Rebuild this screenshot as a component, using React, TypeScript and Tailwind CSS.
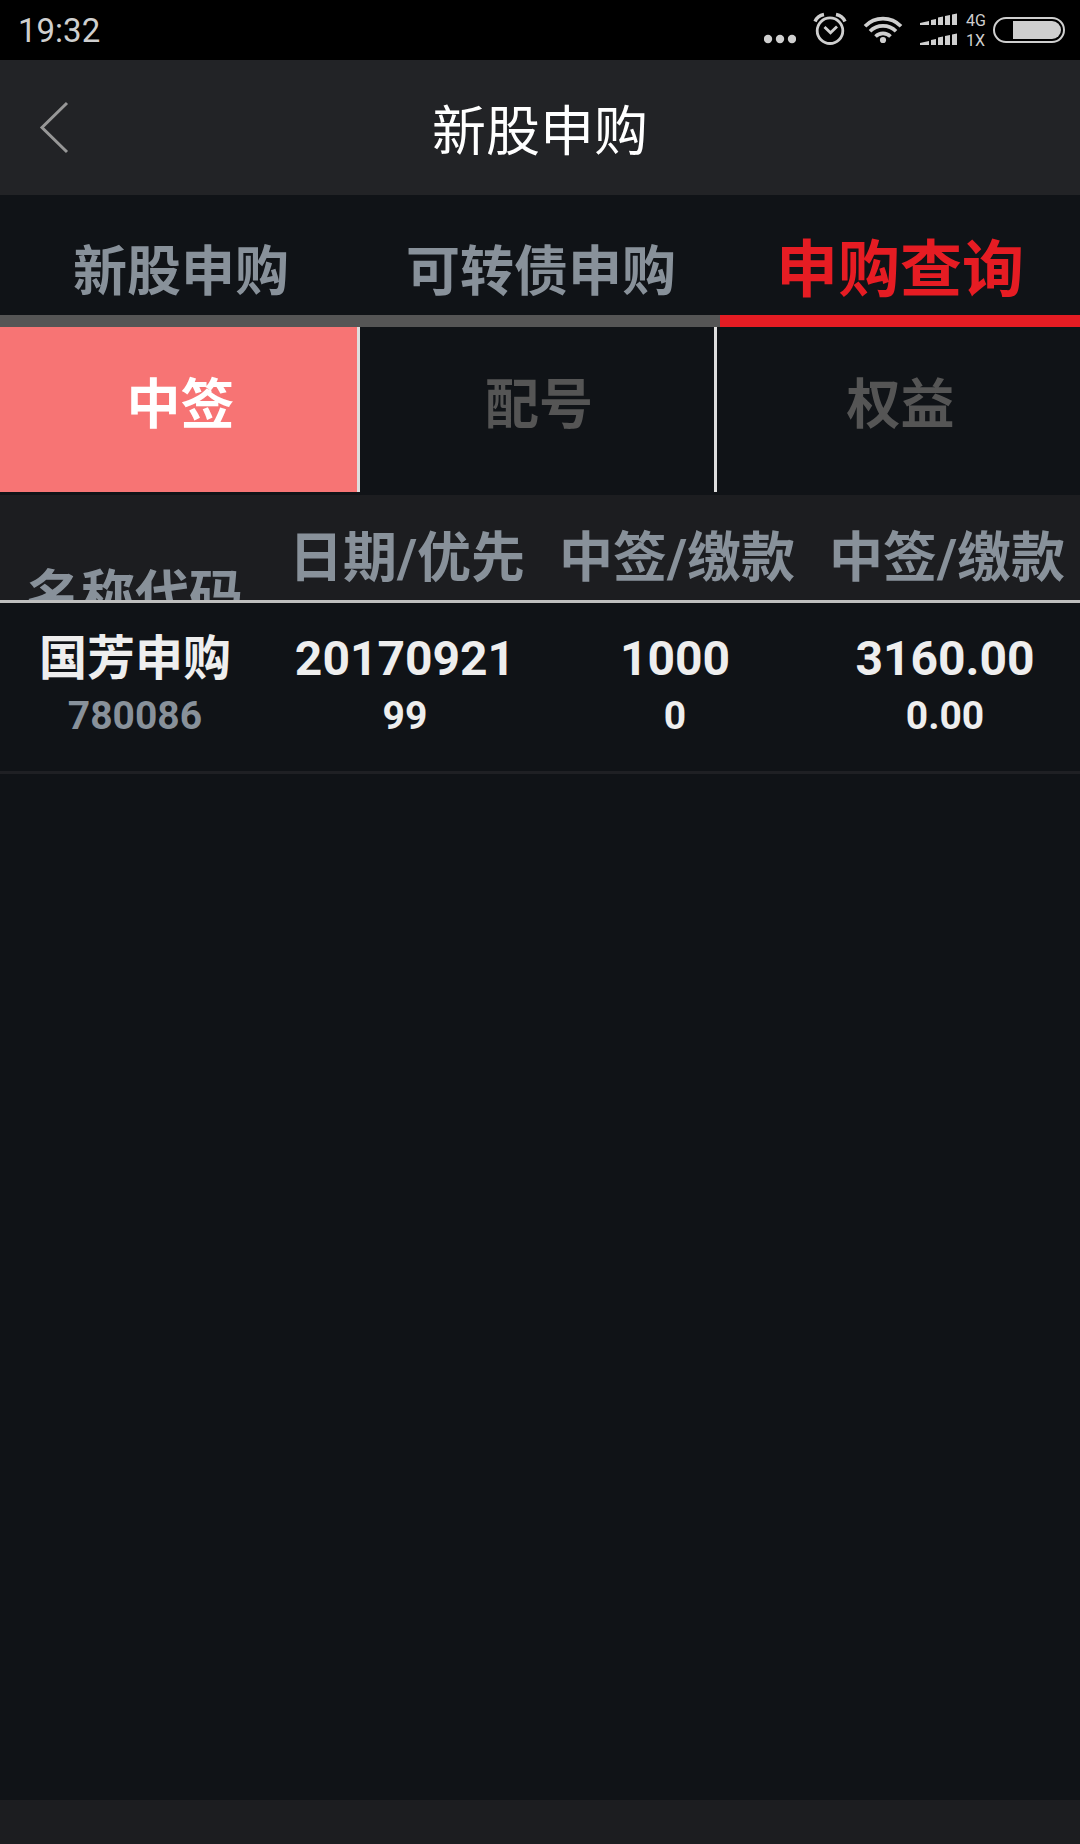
import React from "react";

const queryTabs = ["新股申购", "可转债申购", "申购查询"];
const resultTabs = ["中签", "配号", "权益"];
const columns = ["名称代码", "日期/优先", "中签/缴款", "中签/缴款"];
const rows = [
  [
    ["国芳申购", "780086"],
    ["20170921", "99"],
    ["1000", "0"],
    ["3160.00", "0.00"],
  ],
];

function StatusBar() {
  return (
    <div className="flex h-[60px] shrink-0 items-center justify-between bg-black pl-[18px] pr-[14px] text-[#cfcfcf]">
      <time className="pt-[2px] text-[33px] leading-[58px]">19:32</time>
      <div className="flex items-center">
        <svg className="h-[60px] w-[32px]" viewBox="764 0 32 60" fill="#cfcfcf">
          <circle cx="768" cy="39" r="4.2" />
          <circle cx="780" cy="39" r="4.2" />
          <circle cx="792" cy="39" r="4.2" />
        </svg>
        <svg className="ml-[17px] h-[60px] w-[34px]" viewBox="813 0 34 60" fill="none" stroke="#cfcfcf">
          <circle cx="830" cy="30.7" r="12.8" strokeWidth="2.8" />
          <path d="M824.5 27l6 5.8 6.5-6.3" strokeWidth="2.8" />
          <path d="M815 21.5C816.5 18 820 15.3 824 14.5M845 21.5C843.5 18 840 15.3 836 14.5" strokeWidth="3.4" />
        </svg>
        <svg className="ml-[16px] h-[60px] w-[40px]" viewBox="863 0 40 60" fill="none" stroke="#cfcfcf">
          <path d="M865 26.3A25 25 0 0 1 901 26.3" strokeWidth="3.6" />
          <path d="M870 31.3A18.3 18.3 0 0 1 896 31.3" strokeWidth="3.6" />
          <path d="M875.5 36.5A10.6 10.6 0 0 1 890.5 36.5" strokeWidth="3.6" />
          <circle cx="883" cy="40" r="3.1" fill="#cfcfcf" stroke="none" />
        </svg>
        <svg className="ml-[16px] h-[60px] w-[39px]" viewBox="919 0 39 60" fill="#cfcfcf">
          <path d="M920 23l9-2v4h-9zM931 20l5-1v6h-5zM938 17.500l5-1v8.500h-5zM945 16l5-1v10h-5zM952 14.500l5-1v11.500h-5z" />
          <path d="M920 43l9-2v4h-9zM931 40l5-1v6h-5zM938 37.500l5-1v8.500h-5zM945 36l5-1v10h-5zM952 34.500l5-1v11.500h-5z" />
        </svg>
        <div className="ml-2 flex w-[26px] flex-col pt-[2px] text-[16px] leading-[20px]">
          <span>4G</span>
          <span>1X</span>
        </div>
        <svg className="h-[60px] w-[74px]" viewBox="992 0 74 60">
          <rect x="994" y="18" width="70" height="24" rx="12" fill="none" stroke="#cfcfcf" strokeWidth="2" />
          <path d="M1013 21h39a9 9 0 0 1 0 18h-39z" fill="#cfcfcf" />
        </svg>
      </div>
    </div>
  );
}

export default function App() {
  return (
    <div className="flex min-h-screen flex-col bg-[#101317] font-['Roboto','Noto_Sans_CJK_SC',sans-serif]">
      <StatusBar />

      <header className="grid h-[135px] shrink-0 grid-cols-[1fr_auto_1fr] items-center bg-[#222326]">
        <button type="button" aria-label="返回" className="ml-[30px] w-[60px]">
          <svg className="h-[54px] w-[44px]" viewBox="0 0 44 54" fill="none" stroke="#979797" strokeWidth="3">
            <path d="M37 2L12 26.5L37 51" />
          </svg>
        </button>
        <h1 className="pt-[10px] text-[54px] leading-[80px] text-white">新股申购</h1>
      </header>

      <nav className="grid h-[132px] shrink-0 grid-cols-3 font-bold">
        {queryTabs.map((label, i) => (
          <button
            key={label}
            type="button"
            className={
              i === 2
                ? "border-b-[12px] border-[#e61c23] pt-8 text-[62px] leading-[80px] text-[#e61c23]"
                : "border-b-[12px] border-[#555555] pt-9 pl-[2px] text-[54px] leading-[80px] text-[#88919a]"
            }
          >
            {label}
          </button>
        ))}
      </nav>

      <div className="mb-[3px] grid h-[165px] shrink-0 grid-cols-[360fr_357fr_363fr] text-[54px] font-bold">
        {resultTabs.map((label, i) => (
          <button
            key={label}
            type="button"
            className={
              i === 0
                ? "border-r-[3px] border-[#dedede] bg-[#f77474] pb-2 pl-1 text-white"
                : i === 1
                  ? "border-r-[3px] border-[#dedede] pb-2 pl-1 text-[#555555]"
                  : "pb-2 pl-1 text-[#555555]"
            }
          >
            {label}
          </button>
        ))}
      </div>

      <table className="w-full table-fixed border-collapse text-center font-bold">
        <thead className="bg-[#1c1d20] text-[54px] text-[#88919a]">
          <tr>
            {columns.map((label, i) => (
              <th key={i} className="border-b-[3px] border-[#bfbfbf] p-0">
                <div
                  className={
                    i === 0
                      ? "h-[105px] overflow-hidden whitespace-nowrap pt-[62px] leading-[80px]"
                      : "h-[105px] overflow-hidden whitespace-nowrap pt-[24px] pl-[4px] leading-[80px]"
                  }
                >
                  {label}
                </div>
              </th>
            ))}
          </tr>
        </thead>
        <tbody className="text-[#eeeeee]">
          {rows.map((cells, r) => (
            <tr key={r} className="border-b-[3px] border-[#1f2024]">
              {cells.map(([main, sub], i) => (
                <td key={i} className="px-0 pt-6 pb-[30px]">
                  <div className="text-[48px] leading-[64px]">{main}</div>
                  <div className={i === 0 ? "text-[39px] leading-[50px] text-[#88919a]" : "text-[39px] leading-[50px]"}>
                    {sub}
                  </div>
                </td>
              ))}
            </tr>
          ))}
        </tbody>
      </table>

      <footer className="mt-auto h-[44px] bg-[#1c1d20]" />
    </div>
  );
}
